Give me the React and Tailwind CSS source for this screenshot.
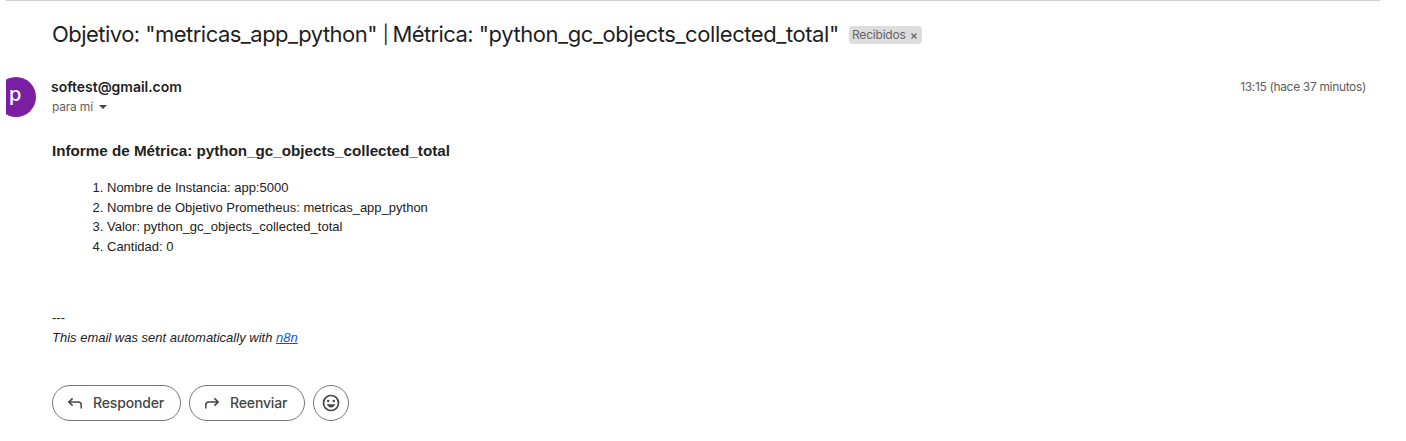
import React from "react";

const metricDetails = [
  "Nombre de Instancia: app:5000",
  "Nombre de Objetivo Prometheus: metricas_app_python",
  "Valor: python_gc_objects_collected_total",
  "Cantidad: 0",
];

function ReplyIcon({ className = "" }) {
  return (
    <svg viewBox="0 0 16 14" className={`h-[14px] w-4 shrink-0 fill-none stroke-[#444746] ${className}`} strokeWidth="1.5">
      <path d="M5.600 2.400 1.800 6l3.800 3.600M2 6h9.200q3 0 3 3v3.400" />
    </svg>
  );
}

function SmileIcon() {
  return (
    <svg viewBox="0 0 18 18" className="size-[18px]">
      <circle cx="9" cy="9" r="7.5" className="fill-none stroke-[#444746]" strokeWidth="1.7" />
      <circle cx="6.2" cy="6.9" r="1.25" className="fill-[#444746]" />
      <circle cx="11.8" cy="6.9" r="1.25" className="fill-[#444746]" />
      <path d="M4.800 10.300h8.400c-.7 2-2.200 3.200-4.200 3.200s-3.500-1.200-4.200-3.200z" className="fill-[#444746]" />
    </svg>
  );
}

function SubjectLine() {
  return (
    <div className="flex h-[68px] items-center pl-[46px]">
      <h1 className="w-[797px] shrink-0 whitespace-nowrap pb-0.5 font-['Inter',sans-serif] text-[22px] leading-7 tracking-[-0.43px] text-[#1f1f1f]">
        <span className="tracking-[-0.53px]">Objetivo: "metricas_app_python"</span>{" "}
        <span className="inline-block w-1 align-[1px] text-[18px] leading-5 tracking-normal">|</span>{" "}
        <span className="tracking-[-0.6px]">Métrica:</span> "python_gc_objects_collected_total"
      </h1>
      <span className="flex h-[18px] w-[73px] items-center justify-between rounded bg-[#dddddd] pr-1 pl-[3px] font-['Inter',sans-serif] text-xs leading-[18px] tracking-[-0.2px] text-[#666666]">
        Recibidos
        <svg viewBox="0 0 8 8" className="mt-0.5 size-2 fill-none stroke-[#666666]" strokeWidth="1.3">
          <path d="m1.500 1.500 5 5M6.500 1.500 1.500 6.500" />
        </svg>
      </span>
    </div>
  );
}

function SenderRow() {
  return (
    <div className="mt-2 flex h-10">
      <div className="h-10 w-[30px] shrink-0 overflow-hidden">
        <div className="-ml-[10px] flex size-10 items-center rounded-full bg-[#7b1fa2] pl-[13px]">
          <span className="pb-[7px] font-['Inter',sans-serif] text-xl leading-7 font-medium text-white">p</span>
        </div>
      </div>
      <div className="ml-[15px] flex flex-1 flex-col font-['Inter',sans-serif]">
        <span className="text-sm leading-5 font-semibold tracking-[-0.03px] text-[#1f1f1f]">softest@gmail.com</span>
        <span className="flex items-center pl-px text-xs leading-5 tracking-[-0.2px] text-[#5e5e5e]">
          para mí
          <svg viewBox="0 0 8 4" className="ml-[6px] h-1 w-2 fill-[#444746]">
            <path d="M0 0h8L4 4z" />
          </svg>
        </span>
      </div>
      <time className="mr-10 whitespace-nowrap font-['Inter',sans-serif] text-xs leading-5 tracking-[-0.34px] text-[#5e5e5e]">
        13:15 (hace 37 minutos)
      </time>
    </div>
  );
}

export default function App() {
  return (
    <main className="h-[441px] w-[1406px] overflow-hidden bg-white pl-[6px]">
      <div className="h-px w-[1374px] bg-[#d0d0d0]" />
      <SubjectLine />
      <SenderRow />
      <section className="ml-[46px] font-['Liberation_Sans',Arial,sans-serif] text-[13px] leading-[19.5px] text-[#222222]">
        <h2 className="mt-[22px] text-[15.21px] leading-[23px] font-bold">
          Informe de Métrica: python_gc_objects_collected_total
        </h2>
        <ol className="mt-4 list-decimal pl-[55px]">
          {metricDetails.map((detail) => (
            <li key={detail}>{detail}</li>
          ))}
        </ol>
        <div className="mt-[52px]">
          <p>---</p>
          <p className="italic">
            This email was sent automatically with <a className="text-[#1155cc] underline">n8n</a>
          </p>
        </div>
      </section>
      <div className="mt-[38px] ml-[46px] flex gap-2 font-['Inter',sans-serif] text-sm font-medium tracking-[-0.15px] text-[#444746]">
        <button className="flex h-9 w-[129px] items-center rounded-full border border-[#747775] pl-[14px]">
          <ReplyIcon />
          <span className="ml-[10px]">Responder</span>
        </button>
        <button className="flex h-9 w-[116px] items-center rounded-full border border-[#747775] pl-[14px]">
          <ReplyIcon className="-scale-x-100" />
          <span className="ml-[10px]">Reenviar</span>
        </button>
        <button aria-label="Reaccionar" className="flex size-9 items-center justify-center rounded-full border border-[#747775]">
          <SmileIcon />
        </button>
      </div>
    </main>
  );
}
